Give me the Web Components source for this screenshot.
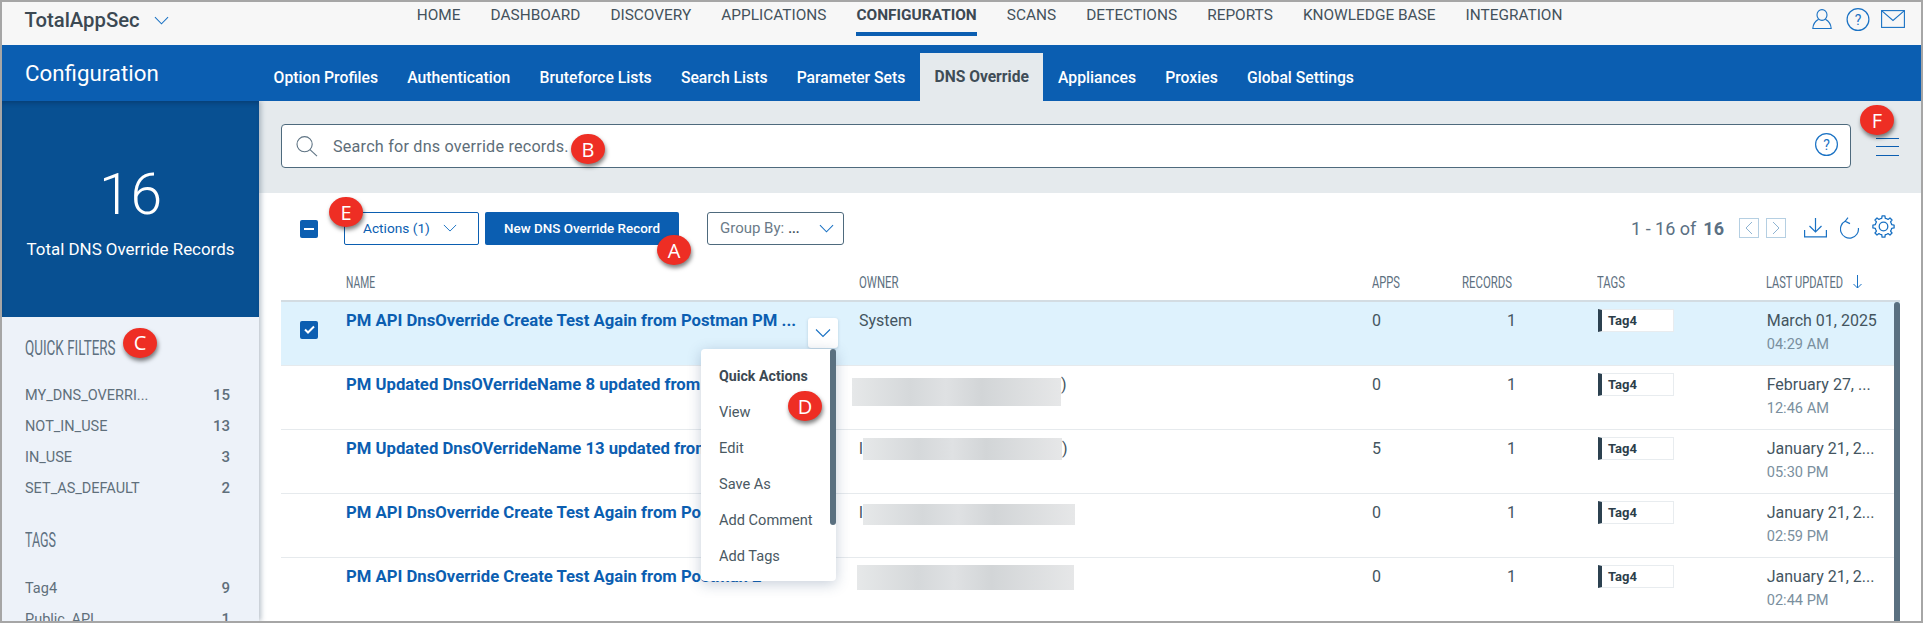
<!DOCTYPE html>
<html lang="en"><head><meta charset="utf-8"><title>TotalAppSec Configuration</title>
<style>
html,body{margin:0;padding:0;background:#fff}
body{font-family:Roboto,"Liberation Sans",sans-serif;width:1923px;height:623px;overflow:hidden}
</style></head><body>
<app-frame>
  <top-nav>
    <nav-link>HOME</nav-link><nav-link>DASHBOARD</nav-link><nav-link>DISCOVERY</nav-link><nav-link>APPLICATIONS</nav-link><nav-link active>CONFIGURATION</nav-link><nav-link>SCANS</nav-link><nav-link>DETECTIONS</nav-link><nav-link>REPORTS</nav-link><nav-link>KNOWLEDGE BASE</nav-link><nav-link>INTEGRATION</nav-link>
  </top-nav>
  <sub-nav>
    <sub-tab>Option Profiles</sub-tab><sub-tab>Authentication</sub-tab><sub-tab>Bruteforce Lists</sub-tab><sub-tab>Search Lists</sub-tab><sub-tab>Parameter Sets</sub-tab><sub-tab active>DNS Override</sub-tab><sub-tab>Appliances</sub-tab><sub-tab>Proxies</sub-tab><sub-tab>Global Settings</sub-tab>
  </sub-nav>
  <main-area>
    <side-panel slot="side">
      <filter-group heading="QUICK FILTERS" w="90.6">
        <filter-item count="15">MY_DNS_OVERRI...</filter-item>
        <filter-item count="13">NOT_IN_USE</filter-item>
        <filter-item count="3">IN_USE</filter-item>
        <filter-item count="2">SET_AS_DEFAULT</filter-item>
      </filter-group>
      <filter-group heading="TAGS" w="31" class="second">
        <filter-item count="9">Tag4</filter-item>
        <filter-item count="1">Public_API</filter-item>
      </filter-group>
    </side-panel>
    <search-band></search-band>
    <tool-bar></tool-bar>
    <data-table>
      <data-row selected apps="0" records="1" date="March 01, 2025" time="04:29 AM">PM API DnsOverride Create Test Again from Postman PM ...<owner-cell slot="owner">System</owner-cell></data-row>
      <data-row clip apps="0" records="1" date="February 27, ..." time="12:46 AM">PM Updated DnsOVerrideName 8 updated from<owner-cell slot="owner"><blur-mask ml="-7" mt="4" w="209" h="28"></blur-mask>)</owner-cell></data-row>
      <data-row clip apps="5" records="1" date="January 21, 2..." time="05:30 PM">PM Updated DnsOVerrideName 13 updated from<owner-cell slot="owner">l<blur-mask ml="0" mt=".3" w="199" h="22"></blur-mask>)</owner-cell></data-row>
      <data-row clip apps="0" records="1" date="January 21, 2..." time="02:59 PM">PM API DnsOverride Create Test Again from Postman<owner-cell slot="owner">l<blur-mask ml="0" mt="2.3" w="212" h="21"></blur-mask></owner-cell></data-row>
      <data-row apps="0" records="1" date="January 21, 2..." time="02:44 PM">PM API DnsOverride Create Test Again from Postman 2<owner-cell slot="owner"><blur-mask ml="-2" mt="-.7" w="217" h="25"></blur-mask></owner-cell></data-row>
    </data-table>
  </main-area>
  <over-lay>
    <row-toggle></row-toggle>
    <quick-menu>
      <b>Quick Actions</b><span>View</span><span>Edit</span><span>Save As</span><span>Add Comment</span><span>Add Tags</span>
    </quick-menu>
    <step-badge x="674" y="250">A</step-badge>
    <step-badge x="588" y="149">B</step-badge>
    <step-badge x="140" y="342.7">C</step-badge>
    <step-badge x="805" y="406">D</step-badge>
    <step-badge x="346" y="212">E</step-badge>
    <step-badge x="1877" y="120">F</step-badge>
  </over-lay>
</app-frame>
<script>
const BLUE='#0b5eb1', ICON='#1a72c4';
const chev=(w,c=ICON)=>`<svg width="${w}" height="${Math.round(w*.6)}" viewBox="0 0 16 9" fill="none" stroke="${c}" stroke-width="1.1"><path d="M1 1l7 7 7-7"/></svg>`;
const help=(w,h)=>`<svg width="${w}" height="${h}" viewBox="0 0 23 23"><ellipse cx="11.5" cy="11.5" rx="10.9" ry="10.9" fill="none" stroke="${ICON}" stroke-width="1.2"/><text x="11.5" y="16.5" text-anchor="middle" font-family="Roboto" font-size="14" fill="${ICON}">?</text></svg>`;
function gearPath(cx,cy,R,r,n){let d='';const st=2*Math.PI/n;for(let i=0;i<n;i++){const a=i*st-Math.PI/2;const pts=[[r,a-st*.5],[r,a-st*.27],[R,a-st*.17],[R,a+st*.17],[r,a+st*.27]];pts.forEach((p,j)=>{const x=(cx+p[0]*Math.cos(p[1])).toFixed(2),y=(cy+p[0]*Math.sin(p[1])).toFixed(2);d+=(i==0&&j==0?'M':'L')+x+' '+y});}return d+'Z'}

function def(name,css,html,init){
  customElements.define(name,class extends HTMLElement{
    constructor(){super();this.attachShadow({mode:'open'})}
    connectedCallback(){
      if(this._done)return;this._done=true;
      const a=n=>this.getAttribute(n);
      this.shadowRoot.innerHTML=`<style>${css}</style>`+(typeof html==='function'?html(a,this):html);
      if(init)init.call(this,a);
    }
  });
}

def('app-frame',`:host{display:block;position:relative;box-sizing:border-box;width:1923px;height:623px;border:2px solid #a6a6a6;overflow:hidden;background:#fff}
.w{display:flex;flex-direction:column;height:100%}`,`<div class="w"><slot></slot></div>`);

def('top-nav',`:host{display:flex;height:43px;background:#f7f7f7;color:#44525c;flex:none}
.brand{display:flex;align-items:center;height:36px;padding-left:22.5px;width:414.7px;flex:none;box-sizing:border-box;gap:14px;font-size:20.3px;font-weight:500;color:#3c4953}
.nav{display:flex;gap:30.1px}
.ic{margin-left:auto;display:flex;align-items:flex-start;padding-right:16px}
.ic svg{display:block}`,
()=>`<div class="brand"><span>TotalAppSec</span>${chev(15)}</div><div class="nav"><slot></slot></div>
<div class="ic">
<svg style="margin-top:7px" width="20" height="20" viewBox="0 0 20 20" fill="none" stroke="${ICON}" stroke-width="1.1"><ellipse cx="10" cy="6" rx="5" ry="5.4"/><path d="M6.6 10.2C3.4 12 1 15 .8 19.5h18.4C19 15 16.6 12 13.4 10.2"/></svg>
<span style="margin:5.5px 0 0 13.5px;display:block">${help(24,23)}</span>
<svg style="margin:8px 0 0 11.5px" width="24" height="18" viewBox="0 0 24 18" fill="none" stroke="${ICON}" stroke-width="1.1"><rect x=".6" y=".6" width="22.8" height="16.8"/><path d="M.6.6L12 10.5 23.4.6"/></svg>
</div>`);

def('nav-link',`:host{display:block;font-size:15.4px;line-height:20px;padding-top:3px;white-space:nowrap;height:28.3px;color:#44525c}
:host([active]){font-weight:700;color:#3c4953;font-size:15.45px;height:23px;border-bottom:4.7px solid ${BLUE};padding-bottom:4.3px}`,`<slot></slot>`);

def('sub-nav',`:host{display:flex;height:56px;flex:none;background:${BLUE};position:relative;z-index:3}
.t{width:257px;box-sizing:border-box;padding:13px 0 0 23px;font-size:22.3px;line-height:30px;color:#fff}
.tabs{display:flex;align-self:flex-end;height:48px}`,`<div class="t">Configuration</div><div class="tabs"><slot></slot></div>`);

def('sub-tab',`:host{display:flex;align-items:center;padding:0 14.6px;font-size:15.72px;font-weight:500;color:#fff;white-space:nowrap}
:host([active]){background:#e5eaed;color:#3f4d57;font-weight:700;font-size:15.6px}`,`<slot></slot>`);

def('main-area',`:host{display:grid;grid-template-columns:257px 1fr;grid-template-rows:92px 52px 1fr;flex:1;min-height:0}
::slotted([slot=side]){grid-row:1/4}`,`<slot name="side"></slot><slot></slot>`);

def('cond-label',`:host{display:inline-block;white-space:nowrap;height:24px;line-height:24px;vertical-align:top}
span{display:inline-block;transform-origin:0 50%}`,
a=>`<span><slot></slot></span>`,
function(a){const s=this.shadowRoot.querySelector('span');const w=+a('w');const n=s.getBoundingClientRect().width;
  this.style.width=w+'px';s.style.transform=`scaleX(${n?w/n:.62})`;});

def('side-panel',`:host{display:flex;flex-direction:column;background:#edf2f9;overflow:hidden;box-shadow:2px 0 5px rgba(50,75,100,.35);position:relative;z-index:2}
.big{height:215.7px;flex:none;background:#085092;color:#fff;text-align:center;box-sizing:border-box;padding-top:64px;box-shadow:inset 0 4px 5px -2px rgba(0,20,50,.3)}
.n{font-size:57px;font-weight:300;line-height:60px}
.l{font-size:16.9px;line-height:24px;margin-top:12px}
.s{padding:20.6px 29px 0 23px}`,
`<div class="big"><div class="n">16</div><div class="l">Total DNS Override Records</div></div><div class="s"><slot></slot></div>`);

def('filter-group',`:host{display:block}
:host(.second){margin-top:24.4px}
.h{font-size:19.6px;color:#5d7080;margin-bottom:19px;line-height:24px}
:host(.second) .h{margin-bottom:20px}`,
a=>`<div class="h"><cond-label w="${a('w')}">${a('heading')}</cond-label></div><slot></slot>`);

def('filter-item',`:host{display:flex;justify-content:space-between;font-size:14.5px;line-height:31px;color:#5f6f7b}
b{font-weight:500;font-size:15px;color:#5f6f7b}`,a=>`<span><slot></slot></span><b>${a('count')}</b>`);

def('search-band',`:host{display:flex;align-items:flex-start;padding:23px 22.5px 0 22px;background:#e5eaed;height:92px;box-sizing:border-box}
.box{flex:1;height:44.4px;box-sizing:border-box;background:#fff;border:1px solid #4e6a7d;border-radius:4px;display:flex;align-items:center;padding:0 12px 0 14px;font-size:16.2px;color:#5e6e79}
.ph{margin-left:15px;letter-spacing:.2px}
.q{margin-left:auto;display:block}
.ham{margin-left:24.5px;width:23px;margin-top:14px;height:16px;border-top:1px solid ${BLUE};border-bottom:1px solid ${BLUE};position:relative}
.ham i{display:block;height:1px;background:${BLUE};margin-top:7px}`,
()=>`<div class="box"><svg width="22" height="21" viewBox="0 0 22 21" fill="none" stroke="#5f7484" stroke-width="1.1"><circle cx="8.6" cy="8.2" r="7.6"/><path d="M14 13.6l7 6.6"/></svg><span class="ph">Search for dns override records.</span><span class="q">${help(23,23)}</span></div><div class="ham"><i></i></div>`);

def('tool-bar',`:host{display:block;height:52px}
.bar{display:flex;align-items:flex-start;padding:19px 26px 0 41px;background:#fff;font-size:14px}
.cb{width:18px;height:18px;border-radius:2px;background:${BLUE};margin-top:8px;position:relative;display:flex;align-items:center;justify-content:center}
.cb i{width:10px;height:2px;background:#fff}
.btn{height:32.7px;box-sizing:border-box;display:flex;align-items:center;border-radius:2px}
.act{width:135px;margin-left:26px;border:1px solid ${BLUE};color:${BLUE};padding-left:18px;gap:13px;font-size:13.7px}
.new{width:194px;margin-left:6px;background:${BLUE};color:#fff;font-weight:500;justify-content:center;font-size:13.4px}
.grp{width:137px;margin-left:28px;border:1px solid #4e6a7d;border-radius:3px;color:#6b7b88;padding-left:12px;font-size:15px;position:relative}
.grp b{color:#44525c;margin-left:4px;font-weight:700;font-size:13px}
.grp svg{margin-left:auto;margin-right:9px}
.pg{margin-left:auto;display:flex;align-items:flex-start;color:#5b7083;font-size:18px;line-height:24px;margin-top:5px}
.pg b{font-weight:700;margin-left:7px}
.nb{width:20px;height:19.7px;border:1.5px solid #b5cfe2;box-sizing:border-box;margin-top:1px;display:flex;align-items:center;justify-content:center}
.ic{display:block}`,
()=>`<div class="bar"><div class="cb"><i></i></div>
<div class="btn act"><span>Actions (1)</span>${chev(14)}</div>
<div class="btn new">New DNS Override Record</div>
<div class="btn grp"><span>Group By:</span><b>...</b>${chev(15)}</div>
<div class="pg"><span>1 - 16 of</span><b>16</b>
<div class="nb" style="margin-left:15px"><svg width="8" height="14" viewBox="0 0 8 14" fill="none" stroke="#8fb4d2"><path d="M7 1L1 7l6 6"/></svg></div>
<div class="nb" style="margin-left:7px"><svg width="8" height="14" viewBox="0 0 8 14" fill="none" stroke="#8fb4d2"><path d="M1 1l6 6-6 6"/></svg></div>
<svg class="ic" style="margin:1px 0 0 18px" width="23" height="20" viewBox="0 0 23 20" fill="none" stroke="${ICON}" stroke-width="1.2"><path d="M11.5 0v14M5.5 8l6 6 6-6M.6 12v6.8h21.8V12" /></svg>
<svg class="ic" style="margin:0 0 0 13px" width="20" height="22" viewBox="0 0 20 22" fill="none" stroke="${ICON}" stroke-width="1.2"><path d="M5.5 4A9 9 0 1 0 18.4 11"/><path d="M8 .7L5.2 4.2 10 6.6"/></svg>
<svg class="ic" style="margin:-2px 0 0 12px" width="23" height="23" viewBox="0 0 23 23" fill="none" stroke="${ICON}" stroke-width="1.3" stroke-linejoin="round"><path d="${gearPath(11.5,11.5,10.7,8.4,8)}"/><circle cx="11.5" cy="11.5" r="4.3"/></svg>
</div></div>`);

def('data-table',`:host{display:block;margin:0 21px 0 22px;position:relative;min-height:0;overflow:hidden;grid-column:2}
.g{display:grid;grid-template-columns:65px 513px 513px 90px 135px 169px 134px;height:57px;align-items:start;box-sizing:border-box;border-bottom:2px solid #d3dce2;padding-top:25px;font-size:16.9px;color:#5d7080}
.g>div{height:24px;line-height:24px;display:flex;align-items:center}
.bar{position:absolute;right:0;top:57px;bottom:0;width:6px;background:#5a7080;border-radius:3px 3px 0 0}`,
()=>`<div class="g"><div></div><div><cond-label w="29">NAME</cond-label></div><div><cond-label w="39.6">OWNER</cond-label></div><div><cond-label w="28">APPS</cond-label></div><div><cond-label w="50">RECORDS</cond-label></div><div><cond-label w="28">TAGS</cond-label></div><div><cond-label w="77">LAST UPDATED</cond-label><svg style="margin-left:10px" width="9" height="14" viewBox="0 0 9 14" fill="none" stroke="${ICON}"><path d="M4.5 0v13M.5 9l4 4 4-4"/></svg></div></div><slot></slot><div class="bar"></div>`);

def('data-row',`:host{display:grid;grid-template-columns:65px 513px 513px 90px 135px 169px 134px;height:64px;box-sizing:border-box;border-bottom:1px solid #e6eaed;padding-top:7.7px;font-size:16px;line-height:22px;color:#44555f;background:#fff}
:host([selected]){background:#def2fd}
.cb{width:18px;height:18px;border-radius:2px;margin:11.3px 0 0 19px;background:${BLUE};display:flex;align-items:center;justify-content:center}
.nm{font-weight:700;font-size:16.7px;color:${BLUE};white-space:nowrap}
:host([clip]) .nm{width:355px;overflow:hidden}
.rec{width:54px;text-align:right}
.tag{display:flex;width:76px;height:23px;box-sizing:border-box;border:1px solid #e8ecef;border-left:4px solid #2c4150;background:#fff;align-items:center;padding-left:6px;font-size:13px;font-weight:700;color:#2c3e4a;margin-top:-.4px;margin-left:1px}
.dt{padding-left:.7px;white-space:nowrap}
.tm{margin-top:1px;font-size:14.6px;color:#7a8f9e}`,
(a,el)=>`<div>${el.hasAttribute('selected')?`<div class="cb"><svg width="11" height="9" viewBox="0 0 11 9" fill="none" stroke="#fff" stroke-width="2"><path d="M1 4.5l3 3 6-6"/></svg></div>`:''}</div>
<div class="nm"><slot></slot></div><div><slot name="owner"></slot></div><div>${a('apps')}</div><div class="rec">${a('records')}</div><div><div class="tag">Tag4</div></div><div class="dt"><div>${a('date')}</div><div class="tm">${a('time')}</div></div>`);

def('owner-cell',`:host{display:flex;align-items:flex-start;white-space:nowrap}`,`<slot></slot>`);
def('blur-mask',`:host{display:block;flex:none;background:linear-gradient(90deg,#e6e8e9,#d5d8da 28%,#dfe1e3 45%,#d2d5d7 62%,#e6e7e8);background-size:100%}`,'',function(a){
  this.style.cssText=`margin-left:${a('ml')}px;margin-top:${a('mt')}px;width:${a('w')}px;height:${a('h')}px`;});

def('over-lay',`:host{position:absolute;left:-2px;top:-2px;width:1923px;height:623px;z-index:5;pointer-events:none}`,`<slot></slot>`);

def('row-toggle',`:host{position:absolute;left:808px;top:317.7px;width:30px;height:30px;background:#fff;border-radius:3px;box-shadow:0 1px 3px rgba(60,90,120,.25);display:flex;align-items:center;justify-content:center}`,()=>chev(16));

def('quick-menu',`:host{position:absolute;left:701px;top:349px;width:135px;height:231.7px;box-sizing:border-box;padding:8.7px 0 0 18px;background:#fff;border-radius:4px;box-shadow:0 3px 14px rgba(50,80,120,.28);font-size:14.6px;line-height:36px;color:#4a5963}
::slotted(*){display:block}
::slotted(b){font-weight:700;color:#3c4953;font-size:14.2px}
.sb{position:absolute;right:0;top:0;width:6px;height:176px;background:#5a7080;border-radius:3px}`,`<slot></slot><div class="sb"></div>`);

def('step-badge',`:host{position:absolute;width:33.5px;height:30px;border-radius:50%;background:#ee2e24;color:#fff;box-shadow:1px 3px 4px rgba(0,0,0,.5);display:flex;align-items:center;justify-content:center;font:20px "Open Sans",Roboto,sans-serif}`,`<slot></slot>`,function(a){
  this.style.left=(+a('x')-16.75)+'px';this.style.top=(+a('y')-15)+'px';});
</script>
</body></html>
